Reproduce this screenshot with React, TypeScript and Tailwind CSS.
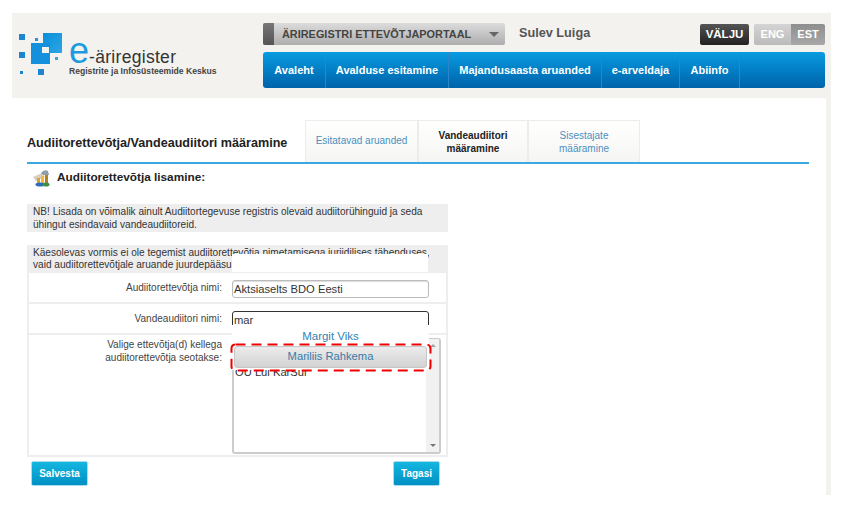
import React from "react";

const navItems = [
  { label: "Avaleht", width: "w-[63px]" },
  { label: "Avalduse esitamine", width: "w-[123px]" },
  { label: "Majandusaasta aruanded", width: "w-[153px]" },
  { label: "e-arveldaja", width: "w-[78px]" },
  { label: "Abiinfo", width: "w-[60px]" },
];

const Logo = () => (
  <div className="flex w-[251px] pl-[7px] pt-[20px] items-start">
    <svg width="46" height="44" viewBox="0 0 46 44" className="shrink-0">
      <defs>
        <linearGradient id="sq" x1="0" y1="0" x2="1" y2="1">
          <stop offset="0" stopColor="#0a8fd8" />
          <stop offset="1" stopColor="#2ba6e6" />
        </linearGradient>
      </defs>
      <rect x="0" y="1" width="6" height="6" fill="#1b86cf" />
      <rect x="16" y="5" width="3" height="3" fill="#2b95d8" />
      <rect x="24" y="0" width="19" height="20" fill="url(#sq)" />
      <rect x="12" y="10" width="19" height="21" fill="#1490dc" />
      <rect x="23" y="14" width="7" height="6" fill="#f3f2ee" />
      <rect x="0" y="19" width="6" height="6" fill="#1b86cf" />
      <rect x="36" y="24" width="3" height="3" fill="#38a5e2" />
      <rect x="1" y="38" width="3" height="3" fill="#1b86cf" />
      <rect x="19" y="36" width="6" height="6" fill="#1b86cf" />
    </svg>
    <div className="ml-[4px] mt-[8px]">
      <div className="flex items-baseline h-[24px] text-[#333]">
        <span className="text-[#1b9ae0] text-[36px] leading-[20px] font-normal">e</span>
        <span className="text-[17.5px] leading-[16px] tracking-[0.3px]">-äriregister</span>
      </div>
      <div className="text-[8.6px] leading-[10px] font-bold text-[#444] whitespace-nowrap mt-[1px]">
        Registrite ja Infosüsteemide Keskus
      </div>
    </div>
  </div>
);

const Header = () => (
  <header className="flex h-[85px] shrink-0">
    <Logo />
    <div className="w-[562px] pt-[10px]">
      <div className="flex items-center h-[22px]">
        <div className="flex w-[242px] h-[22px] rounded-[2px] overflow-hidden bg-gradient-to-b from-[#dcdcdc] to-[#adadad]">
          <div className="w-[11px] bg-gradient-to-b from-[#777] to-[#555]" />
          <span className="ml-[8px] text-[10.9px] leading-[22px] font-bold text-[#444] whitespace-nowrap">ÄRIREGISTRI ETTEVÕTJAPORTAAL</span>
          <span className="ml-auto mr-[6px] mt-[9px] w-0 h-0 border-x-[5px] border-x-transparent border-t-[5px] border-t-[#666]" />
        </div>
        <span className="ml-[14px] text-[12.7px] font-bold text-[#555]">Sulev Luiga</span>
        <div className="ml-auto flex items-center">
          <span className="w-[49px] h-[21px] rounded-[2px] bg-gradient-to-b from-[#555] to-[#222] text-white text-[11.5px] leading-[21px] font-bold text-center">VÄLJU</span>
          <div className="ml-[5px] flex w-[71px] h-[21px] rounded-[2px] overflow-hidden text-white text-[11px] leading-[21px] font-bold text-center">
            <span className="w-[37px] bg-gradient-to-b from-[#d4d4d4] to-[#bbb]">ENG</span>
            <span className="w-[34px] bg-gradient-to-b from-[#8e8e8e] to-[#a8a8a8]">EST</span>
          </div>
        </div>
      </div>
      <nav className="flex mt-[7px] h-[36px] rounded-[3px] overflow-hidden bg-gradient-to-b from-[#0a9be0] to-[#0063aa]">
        {navItems.map((item) => (
          <a key={item.label} className={`${item.width} border-r border-[#2a86c8] text-center text-white text-[11px] leading-[36px] font-bold whitespace-nowrap`}>
            {item.label}
          </a>
        ))}
      </nav>
    </div>
  </header>
);

const Tab = ({ children, active, width }: { children: React.ReactNode; active?: boolean; width: string }) => (
  <div className={`${width} h-[42px] flex items-center justify-center text-center text-[10px] leading-[13px] border-x border-t border-[#ecece8] bg-gradient-to-b from-white to-[#f5f5f3] ${active ? "font-bold text-[#222]" : "text-[#4a90be]"}`}>
    <span>{children}</span>
  </div>
);

const AuditIcon = () => (
  <svg width="18" height="18" viewBox="0 0 18 18" className="shrink-0">
    <path d="M0 8 L9 4 L12 8 L3 12 Z" fill="#d6cfc0" />
    <path d="M8 4 Q11 0 15 2 L16 6 L10 6 Z" fill="#8d9eae" />
    <rect x="4" y="9" width="3" height="5" fill="#e0a030" />
    <rect x="8" y="7" width="3" height="7" fill="#f0b93a" />
    <rect x="12" y="6" width="3" height="8" fill="#b97f1a" />
    <ellipse cx="7" cy="15.5" rx="4.5" ry="2" fill="#2c6fb5" />
    <ellipse cx="13" cy="15.5" rx="3.5" ry="2" fill="#3d8f46" />
  </svg>
);

const FormRow = ({ label, children, className }: { label: React.ReactNode; children: React.ReactNode; className: string }) => (
  <div className={`flex border-b-2 border-[#eeeeee] ${className}`}>
    <div className="w-[193px] pt-[1px] text-right text-[10.05px] leading-[13px] text-[#444] shrink-0">{label}</div>
    <div className="ml-[10px]">{children}</div>
  </div>
);

const TextBox = ({ value, focused }: { value: string; focused?: boolean }) => (
  <div className={`w-[197px] h-[18px] rounded-[3px] border pl-[1px] text-[11.2px] leading-[17px] text-[#333] ${focused ? "border-[#333]" : "border-[#bbbbbb] shadow-[inset_0_1px_1px_#ddd]"}`}>
    {value}
  </div>
);

// red annotation drawn round the highlighted suggestion
const DashedMark = () => (
  <svg width="202" height="29" viewBox="0 0 202 29" className="absolute left-[201px] top-[98px]">
    <rect x="1.5" y="1.5" width="199" height="26" rx="4" fill="none" stroke="#ee0000" strokeWidth="2" strokeDasharray="10 6" />
  </svg>
);

const AuditorForm = () => (
  <div className="relative mt-[13px] w-[421px] h-[212px] border-2 border-[#eeeeee] border-t-0">
    <div className="bg-[#eeeeee] h-[28px] pt-[2px] text-[10.1px] leading-[12px] text-[#333] whitespace-nowrap -mx-[2px] px-[6px]">
      <div>Käesolevas vormis ei ole tegemist audiitorettevõtja nimetamisega juriidilises tähenduses,</div>
      <div>vaid audiitorettevõtjale aruande juurdepääsu</div>
    </div>
    <FormRow label="Audiitorettevõtja nimi:" className="h-[31px] pt-[7px]">
      <TextBox value="Aktsiaselts BDO Eesti" />
    </FormRow>
    <FormRow label="Vandeaudiitori nimi:" className="h-[31px] pt-[7px]">
      <TextBox value="mar" focused />
    </FormRow>
    <div className="flex pt-[3px]">
      <div className="w-[193px] text-right text-[10.05px] leading-[13px] text-[#444] shrink-0">
        Valige ettevõtja(d) kellega
        <br />
        audiitorettevõtja seotakse:
      </div>
      <div className="ml-[10px] flex w-[209px] h-[116px] rounded-[3px] border-2 border-[#cccccc] border-t-[1px] overflow-hidden">
        <div className="flex-1 pt-[26px] pl-[1px] text-[11.2px] leading-[14px] text-[#333]">OÜ Lui KarSur</div>
        <div className="w-[13px] bg-[#f1f1f1] flex flex-col justify-between items-center py-[5px]">
          <span className="w-0 h-0 border-x-[3px] border-x-transparent border-b-[3px] border-b-[#a3a3a3]" />
          <span className="w-0 h-0 border-x-[3px] border-x-transparent border-t-[3px] border-t-[#777]" />
        </div>
      </div>
    </div>

    {/* white patch that hides the end of the note */}
    <div className="absolute left-[203px] top-[9px] w-[196px] h-[18px] bg-white" />

    {/* autocomplete menu */}
    <div className="absolute left-[203px] top-[80px] w-[197px] h-[45px] bg-white text-center text-[11.5px] text-[#3583b5]">
      <div className="h-[20px] leading-[22px]">Margit Viks</div>
      <div className="mx-[2px] mt-[1px] h-[22px] rounded-[3px] border border-[#c6c6c6] bg-gradient-to-b from-[#ececec] to-[#d2d2d2] text-[11.2px] leading-[19px] text-[#3a7ba8]">
        Mariliis Rahkema
      </div>
    </div>
    <DashedMark />
  </div>
);

const CyanButton = ({ children, width }: { children: React.ReactNode; width: string }) => (
  <button className={`${width} h-[25px] rounded-[2px] border border-[#a9dcef] bg-gradient-to-b from-[#14b6e0] to-[#0091c4] text-white text-[10px] font-bold`}>
    {children}
  </button>
);

export default function App() {
  return (
    <div className="h-[506px] bg-white pt-[13px] pl-[12px] font-['Liberation_Sans',Arial,sans-serif]">
      <div className="w-[819px] h-[482px] bg-[#f3f2ee] flex flex-col">
        <Header />
        <main className="w-[814px] flex-1 bg-white rounded-tr-[3px] pl-[15px] pt-[22px]">
          <div className="flex items-end w-[782px] h-[44px] border-b-2 border-[#3aa9e0]">
            <h1 className="w-[278px] pb-[11px] text-[12.6px] leading-[16px] font-bold text-[#222] whitespace-nowrap">
              Audiitorettevõtja/Vandeaudiitori määramine
            </h1>
            <Tab width="w-[113px]"><span className="relative -top-[1px]">Esitatavad aruanded</span></Tab>
            <Tab width="w-[110px]" active>Vandeaudiitori<br />määramine</Tab>
            <Tab width="w-[112px]">Sisestajate<br />määramine</Tab>
          </div>
          <div className="flex items-center h-[28px] pl-[6px]">
            <AuditIcon />
            <h2 className="ml-[6px] text-[11.8px] font-bold text-[#222]">Audiitorettevõtja lisamine:</h2>
          </div>
          <div className="mt-[12px] w-[421px] h-[28px] bg-[#eeeeee] pl-[6px] pt-[1px] text-[10.1px] leading-[13px] text-[#333] whitespace-nowrap">
            NB! Lisada on võimalik ainult Audiitortegevuse registris olevaid audiitorühinguid ja seda
            <br />
            ühingut esindavaid vandeaudiitoreid.
          </div>
          <AuditorForm />
          <div className="flex justify-between w-[409px] ml-[4px] mt-[4px]">
            <CyanButton width="w-[57px]">Salvesta</CyanButton>
            <CyanButton width="w-[47px]">Tagasi</CyanButton>
          </div>
        </main>
      </div>
    </div>
  );
}
